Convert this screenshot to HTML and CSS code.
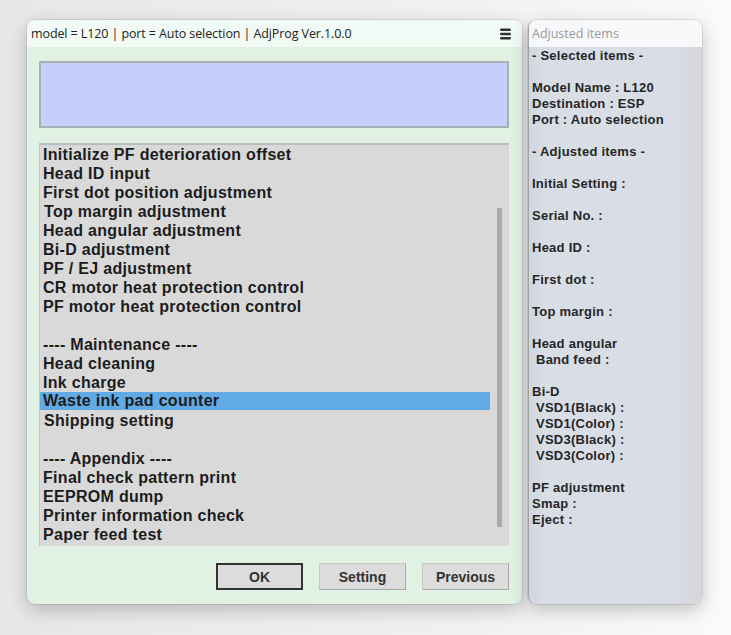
FILE: index.html
```html
<!DOCTYPE html>
<html lang="en">
<head>
    <meta charset="UTF-8">
    <meta name="viewport" content="width=device-width, initial-scale=1.0">
    <title>AdjProg</title>
    <link rel="stylesheet" href="styles.css">
</head>
<body>
    <div class="desktop">
        <div class="window main-window">
            <div class="titlebar">
                <span class="title">model = L120 | port = Auto selection | AdjProg Ver.1.0.0</span>
                <svg class="menu-icon" width="11" height="12" viewBox="0 0 11 12">
                    <rect x="0" y="0.5" width="11" height="2.4" rx="1.2"/>
                    <rect x="0" y="4.8" width="11" height="2.4" rx="1.2"/>
                    <rect x="0" y="9.1" width="11" height="2.4" rx="1.2"/>
                </svg>
            </div>
            <div class="window-body">
                <div class="message-box"></div>

                <div class="listbox">
                    <ul class="items">
                        <li>Initialize PF deterioration offset</li>
                        <li>Head ID input</li>
                        <li>First dot position adjustment</li>
                        <li class="shift">Top margin adjustment</li>
                        <li>Head angular adjustment</li>
                        <li>Bi-D adjustment</li>
                        <li>PF / EJ adjustment</li>
                        <li>CR motor heat protection control</li>
                        <li>PF motor heat protection control</li>
                        <li class="blank"></li>
                        <li>---- Maintenance ----</li>
                        <li>Head cleaning</li>
                        <li>Ink charge</li>
                        <li class="selected">Waste ink pad counter</li>
                        <li class="shift">Shipping setting</li>
                        <li class="blank"></li>
                        <li>---- Appendix ----</li>
                        <li>Final check pattern print</li>
                        <li>EEPROM dump</li>
                        <li>Printer information check</li>
                        <li>Paper feed test</li>
                    </ul>
                    <div class="scroll-track">
                        <div class="scroll-thumb"></div>
                    </div>
                </div>

                <div class="buttons">
                    <button class="btn default">OK</button>
                    <button class="btn">Setting</button>
                    <button class="btn">Previous</button>
                </div>
            </div>
        </div>

        <div class="window side-window">
            <div class="titlebar side-title">Adjusted items</div>
            <div class="side-body">
                <p>- Selected items -</p>
                <p class="blank"></p>
                <p>Model Name : L120</p>
                <p>Destination : ESP</p>
                <p>Port : Auto selection</p>
                <p class="blank"></p>
                <p>- Adjusted items -</p>
                <p class="blank"></p>
                <p>Initial Setting :</p>
                <p class="blank"></p>
                <p>Serial No. :</p>
                <p class="blank"></p>
                <p>Head ID :</p>
                <p class="blank"></p>
                <p>First dot :</p>
                <p class="blank"></p>
                <p>Top margin :</p>
                <p class="blank"></p>
                <p>Head angular</p>
                <p class="indent">Band feed :</p>
                <p class="blank"></p>
                <p>Bi-D</p>
                <p class="indent">VSD1(Black) :</p>
                <p class="indent">VSD1(Color) :</p>
                <p class="indent">VSD3(Black) :</p>
                <p class="indent">VSD3(Color) :</p>
                <p class="blank"></p>
                <p>PF adjustment</p>
                <p>Smap :</p>
                <p>Eject :</p>
            </div>
        </div>
    </div>
</body>
</html>
```

FILE: styles.css
```css
body {
    margin: 0;
    height: 635px;
    overflow: hidden;
    background: linear-gradient(90deg, #e7e7e7 0%, #f0f0f0 60%, #fafafa 100%);
    font-family: "Liberation Sans", Arial, sans-serif;
}
.desktop {
    display: flex;
    gap: 6px;
    padding: 20px 0 0 27px;
}
.window {
    height: 584px;
    border-radius: 8px;
    overflow: hidden;
    display: flex;
    flex-direction: column;
    box-shadow: 0 6px 18px rgba(0,0,0,0.22), 0 0 0 1px rgba(0,0,0,0.08);
}

/* main dialog */
.main-window {
    width: 495px;
    background: #e1f1e3;
}
.titlebar {
    height: 27px;
    flex: none;
    display: flex;
    align-items: center;
    justify-content: space-between;
    padding: 0 11px 0 4px;
    background: #f2faf6;
}
.title {
    font-family: "Open Sans", "Noto Sans", sans-serif;
    font-size: 12.5px;
    color: #222;
    letter-spacing: -0.1px;
}
.menu-icon { fill: #333; }
.window-body {
    flex: 1;
    display: flex;
    flex-direction: column;
    padding: 14px 13px 0 12px;
}
.message-box {
    height: 63px;
    background: #c5cffa;
    border: 2px solid #a9b0b3;
}
.listbox {
    margin-top: 15px;
    height: 401px;
    display: flex;
    background: #d9d9d9;
    border-top: 2px solid #b9bcbc;
    border-left: 1px solid #c3c6c6;
}
.items {
    list-style: none;
    margin: 0;
    padding: 0;
    flex: 1;
}
.items li {
    height: 19px;
    line-height: 19px;
    padding-left: 3px;
    font-size: 16px;
    font-weight: bold;
    letter-spacing: 0.3px;
    color: #1c1c1c;
    white-space: nowrap;
}
.items li.shift { padding-left: 4px; }
.items li.selected {
    background: #62aae4;
    height: 18px;
    line-height: 18px;
    margin-bottom: 1px;
}
.scroll-track {
    width: 19px;
    flex: none;
    padding: 63px 0 0 7px;
    box-sizing: border-box;
}
.scroll-thumb {
    width: 5px;
    height: 319px;
    background: #aaaaaa;
}
.buttons {
    display: flex;
    justify-content: flex-end;
    gap: 16px;
    padding: 17px 0 0 0;
}
.btn {
    width: 87px;
    height: 27px;
    background: #dcdcdc;
    border: 1px solid #c8c8c8;
    border-right-color: #a8a8a8;
    border-bottom-color: #a8a8a8;
    font-family: "Liberation Sans", Arial, sans-serif;
    font-size: 14px;
    font-weight: bold;
    color: #333;
    padding: 0;
}
.btn.default {
    border: 2px solid #333;
}

/* side panel */
.side-window {
    width: 174px;
    background: linear-gradient(90deg, #d2d6de 0%, #d9dde6 10%, #d9dde6 80%, #d4d6da 100%);
    border-left: 1px solid #9ea4a6;
    box-sizing: border-box;
}
.side-title {
    font-family: "Open Sans", "Noto Sans", sans-serif;
    font-size: 12.5px;
    color: #9a9a9a;
    background: #f7f8f9;
    padding-left: 3px;
}
.side-body {
    padding: 1px 0 0 3px;
}
.side-body p {
    margin: 0;
    height: 16px;
    line-height: 16px;
    font-size: 13px;
    font-weight: bold;
    letter-spacing: 0.25px;
    color: #262626;
    white-space: nowrap;
}
.side-body p.indent { padding-left: 4px; }
```
